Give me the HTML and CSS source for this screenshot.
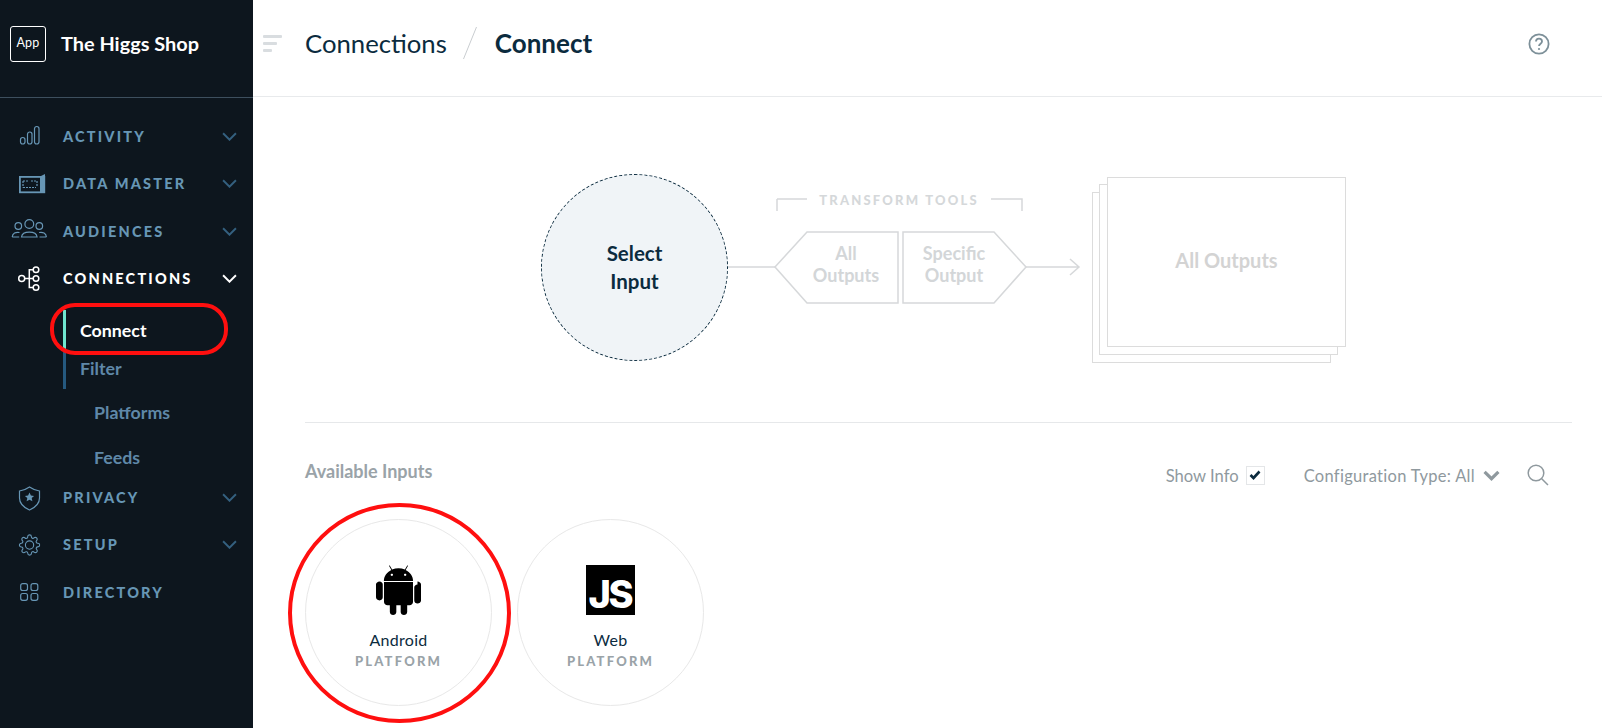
FILE: index.html
```html
<!DOCTYPE html>
<html lang="en">
<head>
<meta charset="utf-8">
<title>Connect</title>
<link rel="stylesheet" href="styles.css">
</head>
<body>
<div class="app">
  <aside class="sidebar">
    <div class="brand">
      <div class="app-badge">App</div>
      <div class="brand-name">The Higgs Shop</div>
    </div>
    <nav class="nav">
      <div class="nav-row">
        <svg class="nav-icon" viewBox="0 0 40 24"><rect x="10.5" y="12.5" width="4.5" height="6.5" rx="2.2"/><rect x="17.5" y="7" width="4.5" height="12" rx="2.2"/><rect x="24.5" y="1.5" width="4.5" height="17.5" rx="2.2"/></svg>
        <span class="nav-label">Activity</span>
        <svg class="chev" viewBox="0 0 14 8"><path d="M1 1l6 6 6-6"/></svg>
      </div>
      <div class="nav-row">
        <svg class="nav-icon" viewBox="0 0 40 24"><rect x="9.900" y="4.900" width="24.400" height="15.400" stroke-width="1.800"/><path class="fill" d="M30 4.500l5-2.500v18h-5z"/><path d="M13 9h5M21 9h6v6M13 15.500h13M13 9v6.500" stroke-dasharray="2 1"/></svg>
        <span class="nav-label">Data Master</span>
        <svg class="chev" viewBox="0 0 14 8"><path d="M1 1l6 6 6-6"/></svg>
      </div>
      <div class="nav-row">
        <svg class="nav-icon" viewBox="0 0 40 24"><circle cx="19.300" cy="5" r="4.400"/><circle cx="8.300" cy="7" r="3.300"/><circle cx="29.300" cy="7" r="3.300"/><path d="M11.500 18c.8-6.500 14.800-6.500 15.600 0zM2.200 18c.3-3.800 3.500-5.200 7.300-4.500M36.400 18c-.3-3.800-3.500-5.200-7.300-4.500M2.200 18h7M29.500 18h6.900"/></svg>
        <span class="nav-label">Audiences</span>
        <svg class="chev" viewBox="0 0 14 8"><path d="M1 1l6 6 6-6"/></svg>
      </div>
      <div class="nav-row is-open">
        <svg class="nav-icon" viewBox="0 0 40 24"><circle cx="11.700" cy="11.500" r="3"/><circle cx="26" cy="2.800" r="2.800"/><circle cx="26" cy="11.500" r="2.800"/><circle cx="26" cy="20.500" r="2.800"/><path d="M14.700 11.500h8.500M23.200 2.800h-3.900v17.700h3.900"/></svg>
        <span class="nav-label">Connections</span>
        <svg class="chev" viewBox="0 0 14 8"><path d="M1 1l6 6 6-6"/></svg>
      </div>
      <div class="sub">
        <div class="sub-item is-current">Connect</div>
        <div class="sub-item">Filter</div>
        <div class="sub-nested">
          <div class="nested-item">Platforms</div>
          <div class="nested-item">Feeds</div>
        </div>
      </div>
      <div class="nav-row">
        <svg class="nav-icon" viewBox="0 0 40 24"><path d="M19.500 1C16 3.500 12.500 4.500 9.500 5v7c0 6 4.500 9.500 10 12 5.500-2.500 10-6 10-12V5c-3-.5-6.500-1.500-10-4z"/><path class="fill" d="M19.500 6.500l1.400 3 3.200.4-2.400 2.200.7 3.200-2.900-1.600-2.900 1.600.7-3.200-2.400-2.200 3.200-.4z"/></svg>
        <span class="nav-label">Privacy</span>
        <svg class="chev" viewBox="0 0 14 8"><path d="M1 1l6 6 6-6"/></svg>
      </div>
      <div class="nav-row">
        <svg class="nav-icon" viewBox="0 0 40 24"><g transform="translate(8.500 1)" ><circle cx="12" cy="12" r="4.500" transform="scale(.92)"/><path transform="scale(.92)" d="M19.400 15a1.650 1.650 0 0 0 .33 1.820l.06.06a2 2 0 0 1 0 2.830 2 2 0 0 1-2.830 0l-.06-.06a1.650 1.650 0 0 0-1.820-.33 1.650 1.650 0 0 0-1 1.510V21a2 2 0 0 1-2 2 2 2 0 0 1-2-2v-.09A1.650 1.650 0 0 0 9 19.400a1.650 1.650 0 0 0-1.820.33l-.06.06a2 2 0 0 1-2.830 0 2 2 0 0 1 0-2.830l.06-.06a1.650 1.650 0 0 0 .33-1.820 1.650 1.650 0 0 0-1.510-1H3a2 2 0 0 1-2-2 2 2 0 0 1 2-2h.09A1.650 1.650 0 0 0 4.600 9a1.650 1.650 0 0 0-.33-1.820l-.06-.06a2 2 0 0 1 0-2.830 2 2 0 0 1 2.830 0l.06.06a1.650 1.650 0 0 0 1.820.33H9a1.650 1.650 0 0 0 1-1.510V3a2 2 0 0 1 2-2 2 2 0 0 1 2 2v.09a1.650 1.650 0 0 0 1 1.510 1.650 1.650 0 0 0 1.820-.33l.06-.06a2 2 0 0 1 2.830 0 2 2 0 0 1 0 2.830l-.06.06a1.650 1.650 0 0 0-.33 1.820V9a1.650 1.650 0 0 0 1.510 1H21a2 2 0 0 1 2 2 2 2 0 0 1-2 2h-.09a1.650 1.650 0 0 0-1.510 1z"/></g></svg>
        <span class="nav-label">Setup</span>
        <svg class="chev" viewBox="0 0 14 8"><path d="M1 1l6 6 6-6"/></svg>
      </div>
      <div class="nav-row">
        <svg class="nav-icon" viewBox="0 0 40 24"><rect x="10.700" y="3.700" width="6.800" height="6.800" rx="2"/><rect x="21" y="3.700" width="6.800" height="6.800" rx="2"/><rect x="10.700" y="13.500" width="6.800" height="6.800" rx="2"/><rect x="21" y="13.500" width="6.800" height="6.800" rx="2"/></svg>
        <span class="nav-label">Directory</span>
      </div>
    </nav>
  </aside>

  <main class="main">
    <header class="topbar">
      <div class="collapse-icon"><span></span><span></span><span></span></div>
      <div class="crumb">Connections</div>
      <svg class="crumb-sep" viewBox="0 0 14 32"><path d="M13.500 0L.5 32"/></svg>
      <div class="crumb crumb-current">Connect</div>
      <svg class="help" viewBox="0 0 22 22"><circle cx="11" cy="11" r="9.600"/><path d="M8 8.600c0-1.800 1.400-2.900 3-2.900s3 1.100 3 2.700c0 2.300-3 2.300-3 4.700"/><circle class="dot" cx="11" cy="16" r="1.100"/></svg>
    </header>

    <div class="content">
      <section class="diagram">
        <svg class="wires" viewBox="0 0 1297 325">
          <path d="M422 170H470M472 102V114M472 102H502M686 102H717V114"/>
          <path d="M470 170L502 135H593V206H502Z"/>
          <path d="M598 135H689L721 170L689 206H598Z"/>
          <path d="M721 170H774M765 162L774 170L765 178"/>
        </svg>
        <div class="select-input">Select<br>Input</div>
        <div class="tools-title">Transform Tools</div>
        <div class="hex-label hex-left">All<br>Outputs</div>
        <div class="hex-label hex-right">Specific<br>Output</div>
        <div class="sheet sheet-back"></div>
        <div class="sheet sheet-mid"></div>
        <div class="sheet sheet-front">All Outputs</div>
      </section>

      <section class="inputs">
        <div class="inputs-head">
          <div class="inputs-title">Available Inputs</div>
          <div class="tools">
            <span class="tool-text tool-info">Show Info</span>
            <span class="check"><svg viewBox="0 0 12 10"><path d="M1.500 5l3 3 6-6.500"/></svg></span>
            <span class="tool-text tool-config">Configuration Type: All</span>
            <svg class="tool-chev" viewBox="0 0 16 10"><path d="M1.500 1.500L8 8l6.500-6.500"/></svg>
            <svg class="tool-search" viewBox="0 0 22 22"><circle cx="9" cy="9" r="7.800"/><path d="M14.700 14.700l6.300 6.300"/></svg>
          </div>
        </div>
        <div class="cards">
          <div class="card">
            <svg class="card-logo android" viewBox="32 28 384 452" preserveAspectRatio="none"><path d="M89.600 204.500v115.800c0 15.400-12.100 27.700-27.500 27.700-15.300 0-30.100-12.400-30.100-27.700V204.500c0-15.100 14.800-27.500 30.100-27.500 15.100 0 27.500 12.400 27.500 27.500zm10.800 157c0 16.400 13.200 29.600 29.600 29.600h19.900l.3 61.100c0 36.900 55.200 36.600 55.200 0v-61.100h37.200v61.100c0 36.700 55.500 36.800 55.500 0v-61.100h20.200c16.200 0 29.400-13.200 29.400-29.600V182.100H100.400v179.400zm248-189.100H99.300c0-42.800 25.600-80 63.600-99.400l-19.100-35.300c-2.800-4.900 4.300-8 6.700-3.800l19.400 35.600c34.900-15.500 75-14.700 108.300 0L297.500 34c2.500-4.200 9.500-1.100 6.700 3.800L285.100 73c37.700 19.400 63.300 56.600 63.300 99.400zm-170.700-55.500c0-5.700-4.600-10.500-10.500-10.500-5.700 0-10.200 4.800-10.200 10.500s4.600 10.500 10.200 10.500c5.900 0 10.500-4.800 10.500-10.500zm113.400 0c0-5.700-4.600-10.500-10.200-10.500-5.900 0-10.500 4.800-10.500 10.500s4.600 10.500 10.500 10.500c5.600 0 10.200-4.800 10.200-10.500zm94.800 87.600c-15.100 0-27.500 12.100-27.500 27.500v115.800c0 15.400 12.400 27.700 27.500 27.700 15.400 0 30.100-12.400 30.100-27.700V204.500c0-15.400-14.800-27.500-30.100-27.500z"/></svg>
            <div class="card-name">Android</div>
            <div class="card-type">Platform</div>
          </div>
          <div class="card">
            <div class="card-logo js-logo">JS</div>
            <div class="card-name">Web</div>
            <div class="card-type">Platform</div>
          </div>
        </div>
      </section>
    </div>
  </main>
  <div class="mark mark-pill"></div>
  <div class="mark mark-circle"></div>
</div>
</body>
</html>
```
FILE: styles.css
```css
* { box-sizing: border-box; }
html, body { margin: 0; height: 100%; }
body { font-family: "Lato", "Open Sans", sans-serif; color: #0b2b3e; background: #fff; overflow: hidden; }
.app { position: relative; display: flex; height: 728px; overflow: hidden; }

.sidebar { width: 253px; flex: none; background: #0d161e; color: #fff; }
.brand { height: 98px; display: flex; align-items: center; gap: 15px; padding: 0 0 9px 10px; border-bottom: 1px solid #3d4f5e; }
.app-badge { width: 36px; height: 36px; border: 1px solid #fff; border-radius: 3px; display: flex; align-items: center; justify-content: center; font-size: 12.500px; letter-spacing: .2px; padding-bottom: 3px; }
.brand-name { font-size: 19.900px; font-weight: 700; margin-top: -2px; }

.nav { padding-top: 15px; }
.nav-row { height: 47.300px; display: flex; align-items: center; padding-left: 10px; color: #6796b5; }
.nav-icon { width: 40px; height: 24px; flex: none; fill: none; stroke: #6796b5; stroke-width: 1.2; overflow: visible; }
.nav-icon .fill { fill: #6796b5; stroke: none; }
.nav-label { margin-left: 13px; font-size: 14.500px; font-weight: 900; letter-spacing: 2.200px; text-transform: uppercase; flex: 1; }
.chev { width: 15px; height: 9px; margin-right: 16px; flex: none; fill: none; stroke: #34607f; stroke-width: 1.8; }
.is-open { color: #fff; }
.is-open .nav-icon { stroke: #fff; stroke-width: 1.5; }
.is-open .chev { stroke: #fff; }

.sub { margin: 8px 0 .3px 63px; }
.sub-item { height: 40px; padding-left: 14px; display: flex; align-items: center; font-size: 17.800px; font-weight: 700; color: #5f88a8; border-left: 3px solid #25597f; }
.sub-item + .sub-item { height: 39px; padding-bottom: 3px; }
.is-current { color: #fff; border-left-color: #6fe6cf; }
.sub-nested { margin-top: 6px; padding-left: 31px; display: flex; flex-direction: column; gap: 10.500px; }
.nested-item { height: 34px; display: flex; align-items: center; font-size: 17.800px; font-weight: 700; color: #5f88a8; }

.main { flex: 1; min-width: 0; }
.topbar { height: 97px; display: flex; align-items: center; border-bottom: 1px solid #e8eaec; padding: 0 52px 10px 10px; }
.collapse-icon { width: 19px; display: flex; flex-direction: column; gap: 4px; margin-right: 23px; }
.collapse-icon span { height: 3px; background: #d9dde0; border-radius: 1px; width: 100%; }
.collapse-icon span:nth-child(2) { width: 14px; }
.collapse-icon span:nth-child(3) { width: 9px; }
.crumb { font-size: 25.700px; }
.crumb-current { font-size: 26px; font-weight: 700; }
.crumb-sep { width: 14px; height: 32px; margin: 0 18px 0 16px; fill: none; stroke: #c9cdd0; }
.help { width: 22px; height: 22px; margin: 2px 0 0 auto; fill: none; stroke: #7d9099; stroke-width: 1.8; }
.help .dot { fill: #7d9099; stroke: none; }

.content { padding: 0 30px 0 52px; }
.diagram { position: relative; height: 326px; border-bottom: 1px solid #e6e8ea; }
.wires { position: absolute; left: 0; top: 0; width: 1297px; height: 325px; fill: none; stroke: #d6d8da; stroke-width: 1.5; }
.select-input { position: absolute; left: 236px; top: 77px; width: 187px; height: 187px; border-radius: 50%; border: 1px dashed #0b2b3e; background: #f0f4f7; display: flex; align-items: center; justify-content: center; text-align: center; font-size: 20.500px; font-weight: 700; line-height: 28px; padding-bottom: 2px; }
.tools-title { position: absolute; left: 502px; top: 94px; width: 184px; text-align: center; font-size: 13px; font-weight: 900; letter-spacing: 2.200px; text-transform: uppercase; color: #d5d8da; line-height: 18px; }
.hex-label { position: absolute; top: 146px; width: 90px; text-align: center; font-size: 18px; font-weight: 700; line-height: 21.500px; color: #d3d6d8; }
.hex-left { left: 496px; }
.hex-right { left: 604px; }
.sheet { position: absolute; width: 239px; height: 171px; border: 1.500px solid #dcdcdc; background: #fff; }
.sheet-back { left: 787px; top: 95px; }
.sheet-mid { left: 794px; top: 87px; }
.sheet-front { left: 802px; top: 80px; height: 170px; display: flex; align-items: center; justify-content: center; font-size: 20px; font-weight: 700; color: #d3d3d3; padding-bottom: 5px; }

.inputs-head { display: flex; justify-content: space-between; align-items: flex-start; padding-top: 36px; height: 96px; }
.inputs-title { font-size: 18px; font-weight: 700; color: #9aa3a8; line-height: 24px; }
.tools { display: flex; align-items: center; height: 22px; margin: 5px 23px 0 0; color: #8f999e; }
.tool-text { font-size: 16.700px; }
.tool-info { padding-top: 2px; font-size: 16.600px; }
.check { width: 19px; height: 19px; margin-left: 7px; border: 1px solid #e4e6e8; display: flex; align-items: center; justify-content: center; }
.check svg { width: 12px; height: 10px; fill: none; stroke: #0b2b3e; stroke-width: 2.600; }
.tool-config { margin-left: 39px; padding-top: 1px; font-size: 16.500px; letter-spacing: .3px; }
.tool-chev { width: 17px; height: 11px; margin-left: 8px; fill: none; stroke: #8f999e; stroke-width: 3; }
.tool-search { width: 22px; height: 22px; margin-left: 27px; fill: none; stroke: #8f999e; stroke-width: 1.500; }

.cards { display: flex; gap: 25px; }
.card { width: 187px; height: 187px; border: 1px solid #e8e8e8; border-radius: 50%; display: flex; flex-direction: column; align-items: center; padding-top: 45px; }
.card-logo { width: 45px; height: 50px; flex: none; }
.android { fill: #000; }
.js-logo { width: 49px; background: #000; color: #fff; font: 800 38px/28px "Inter", sans-serif; letter-spacing: -2.500px; display: flex; align-items: flex-end; justify-content: flex-end; padding: 0 4px 7px 0; }
.card-name { margin-top: 15px; font-size: 16px; line-height: 20px; letter-spacing: .3px; }
.card-type { margin-top: 2px; font-size: 13px; font-weight: 900; letter-spacing: 2.200px; line-height: 18px; color: #9aa3a8; text-transform: uppercase; }

.mark { position: absolute; border: 4.500px solid #ff0f0f; pointer-events: none; }
.mark-pill { left: 50px; top: 303px; width: 178px; height: 52px; border-radius: 25px; }
.mark-circle { left: 288px; top: 503px; width: 223px; height: 220px; border-radius: 50%; }
```
